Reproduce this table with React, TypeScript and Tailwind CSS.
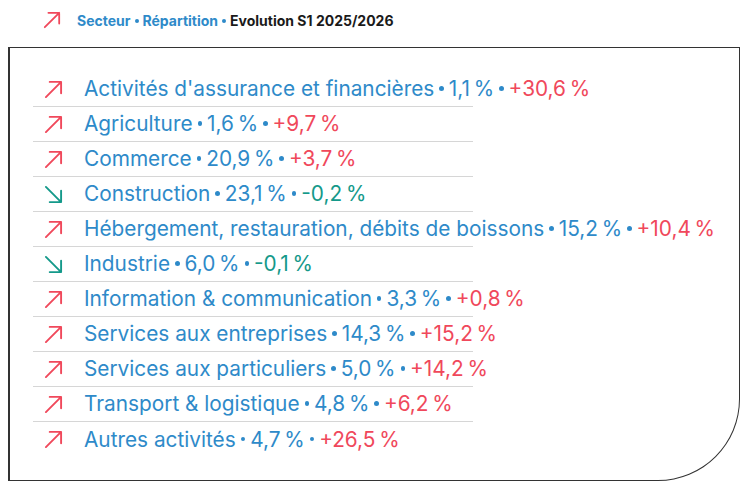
const rows = [
  { name: "Activités d'assurance et financières", share: "1,1\u202F%", evo: "+30,6\u202F%", up: true },
  { name: "Agriculture", share: "1,6\u202F%", evo: "+9,7\u202F%", up: true },
  { name: "Commerce", share: "20,9\u202F%", evo: "+3,7\u202F%", up: true },
  { name: "Construction", share: "23,1\u202F%", evo: "-0,2\u202F%", up: false },
  { name: "Hébergement, restauration, débits de boissons", share: "15,2\u202F%", evo: "+10,4\u202F%", up: true },
  { name: "Industrie", share: "6,0\u202F%", evo: "-0,1\u202F%", up: false },
  { name: "Information & communication", share: "3,3\u202F%", evo: "+0,8\u202F%", up: true },
  { name: "Services aux entreprises", share: "14,3\u202F%", evo: "+15,2\u202F%", up: true },
  { name: "Services aux particuliers", share: "5,0\u202F%", evo: "+14,2\u202F%", up: true },
  { name: "Transport & logistique", share: "4,8\u202F%", evo: "+6,2\u202F%", up: true },
  { name: "Autres activités", share: "4,7\u202F%", evo: "+26,5\u202F%", up: true },
];

function Arrow({ up, size = 19 }: { up: boolean; size?: number }) {
  return (
    <svg width={size} height={size} viewBox="0 0 20 20" fill="none" strokeWidth={2} strokeLinecap="round" strokeLinejoin="round"
      className={`shrink-0 ${up ? "stroke-[#f0485b]" : "stroke-[#14998a]"}`}>
      {up ? <path d="M2 18 L18 2 M6 2 H18 V14" /> : <path d="M2 2 L18 18 M6 18 H18 V6" />}
    </svg>
  );
}

function Dot({ small }: { small?: boolean }) {
  return (
    <span className={`inline-block rounded-full bg-current align-middle relative ${small ? "w-[4px] h-[4px] mx-[4px] -top-[1px]" : "w-[4.5px] h-[4.5px] mx-[5px] -top-[2px]"}`} />
  );
}

export default function App() {
  return (
    <div className="w-[747px] h-[491px] bg-white font-['Inter',sans-serif]">
      {/* legend */}
      <div className="flex items-center h-[40px] pl-[43px] gap-[16px] text-[14px] font-bold">
        <Arrow up size={18} />
        <p className="whitespace-nowrap">
          <span className="text-[#2e8ac9]">Secteur<Dot small />Répartition<Dot small /></span>
          <span className="text-[#1a1a1a]">Evolution S1 2025/2026</span>
        </p>
      </div>

      <div className="ml-[8px] mt-[7px] w-[732px] h-[434px] border border-[#333] border-l-2 rounded-br-[82px] pt-[24px] pl-[23px]">
        <ul>
          {rows.map((r, i) => (
            <li key={r.name}
              className={`w-[440px] h-[35px] flex items-center gap-[21px] pl-[11px] whitespace-nowrap text-[20.8px] ${i < rows.length - 1 ? "border-b border-[#d6d6d6]" : ""}`}>
              <Arrow up={r.up} />
              <span className="text-[#2e8ac9]">
                {r.name}<Dot />{r.share}<Dot />
                <span className={r.up ? "text-[#f0485b]" : "text-[#14998a]"}>{r.evo}</span>
              </span>
            </li>
          ))}
        </ul>
      </div>
    </div>
  );
}
